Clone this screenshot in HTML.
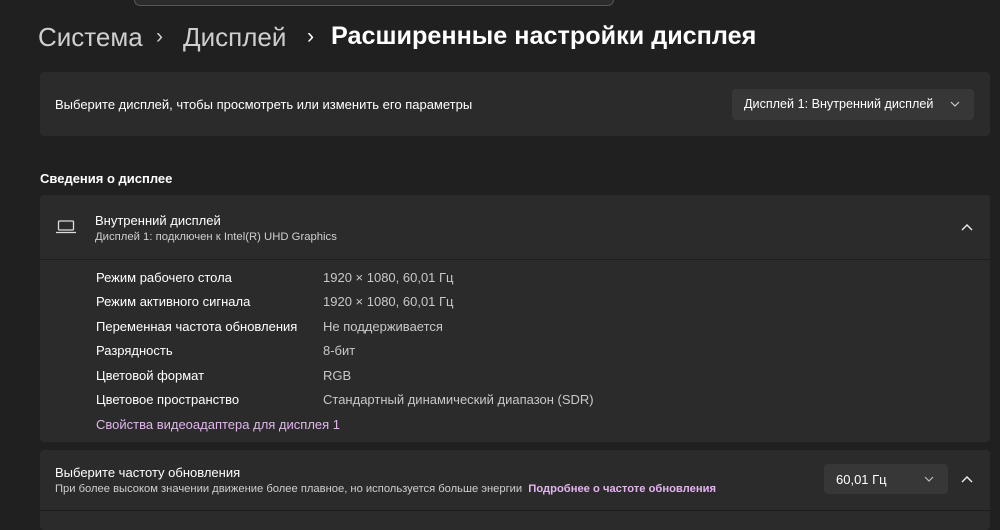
<!DOCTYPE html>
<html><head><meta charset="utf-8"><style>
body{margin:0;width:1000px;height:515px;background:#202020;font-family:"Liberation Sans","DejaVu Sans",sans-serif;color:#fff;position:relative;overflow:hidden}
.a{position:absolute}
.card{position:absolute;left:40px;width:950px;background:#2b2b2b;border-radius:4px}
.t{font-size:13px;color:#fff;white-space:nowrap}
.s{font-size:11.3px;color:#cfcfcf;white-space:nowrap}
.l{position:absolute;left:96px;font-size:13px;color:#fff;white-space:nowrap}
.v{position:absolute;left:323px;font-size:13px;color:#c8c8c8;white-space:nowrap}
.h{position:absolute;top:22px;font-size:26px;white-space:nowrap}
</style></head><body>
<div class="a" style="left:134px;top:-10px;width:478px;height:14px;border:1px solid #555;border-radius:6px;background:#2c2c2c"></div>
<div class="h" style="left:38px;color:#cfcfcf">Система</div>
<div class="h" style="left:156px;color:#cfcfcf;font-size:21px;top:25px">›</div>
<div class="h" style="left:183px;color:#cfcfcf">Дисплей</div>
<div class="h" style="left:307px;color:#fff;font-size:21px;top:25px">›</div>
<div class="h" style="left:331px;font-weight:bold;font-size:25.2px;top:22px">Расширенные настройки дисплея</div>
<div class="card" style="top:72px;height:64px">
<div class="a t" style="left:15px;top:25px">Выберите дисплей, чтобы просмотреть или изменить его параметры</div>
<div class="a" style="left:692px;top:17px;width:242px;height:31px;background:#373737;border-radius:4px"><span class="a t" style="left:12px;top:8px;font-size:12.6px">Дисплей 1: Внутренний дисплей</span><svg class="a" style="left:218px;top:12px" width="10" height="6"><path d="M1 1L5 5L9 1" stroke="#ccc" fill="none" stroke-width="1.2"/></svg></div>
</div>
<div class="a" style="left:40px;top:171px;font-size:13px;font-weight:bold">Сведения о дисплее</div>
<div class="card" style="top:195px;height:247px">
<svg class="a" style="left:16px;top:25px" width="20" height="14"><rect x="2.5" y="1" width="15" height="9" rx="1" stroke="#ddd" fill="none" stroke-width="1.3"/><path d="M0 12.5H20" stroke="#ddd" stroke-width="1.3"/></svg>
<div class="a t" style="left:55px;top:18px">Внутренний дисплей</div>
<div class="a s" style="left:55px;top:36px">Дисплей 1: подключен к Intel(R) UHD Graphics</div>
<svg class="a" style="left:921px;top:28px" width="12" height="8"><path d="M1 7L6 2L11 7" stroke="#eee" fill="none" stroke-width="1.4"/></svg>
<div class="a" style="left:0;top:64px;width:950px;height:1px;background:#1e1e1e"></div>
</div>
<div class="l" style="top:270px">Режим рабочего стола</div><div class="v" style="top:270px">1920 × 1080, 60,01 Гц</div>
<div class="l" style="top:294px">Режим активного сигнала</div><div class="v" style="top:294px">1920 × 1080, 60,01 Гц</div>
<div class="l" style="top:319px">Переменная частота обновления</div><div class="v" style="top:319px">Не поддерживается</div>
<div class="l" style="top:343px">Разрядность</div><div class="v" style="top:343px">8-бит</div>
<div class="l" style="top:368px">Цветовой формат</div><div class="v" style="top:368px">RGB</div>
<div class="l" style="top:392px">Цветовое пространство</div><div class="v" style="top:392px">Стандартный динамический диапазон (SDR)</div>
<div class="l" style="top:417px;color:#e3b4f0">Свойства видеоадаптера для дисплея 1</div>
<div class="card" style="top:450px;height:80px">
<div class="a t" style="left:15px;top:15px">Выберите частоту обновления</div>
<div class="a s" style="left:15px;top:33px;font-size:11.2px">При более высоком значении движение более плавное, но используется больше энергии <span style="color:#e3b4f0;font-weight:bold;margin-left:3px">Подробнее о частоте обновления</span></div>
<div class="a" style="left:784px;top:14px;width:124px;height:30px;background:#373737;border-radius:4px"><span class="a t" style="left:12px;top:8px">60,01 Гц</span><svg class="a" style="left:100px;top:12px" width="10" height="6"><path d="M1 1L5 5L9 1" stroke="#bbb" fill="none" stroke-width="1.2"/></svg></div>
<svg class="a" style="left:921px;top:25px" width="12" height="8"><path d="M1 7L6 2L11 7" stroke="#eee" fill="none" stroke-width="1.4"/></svg>
<div class="a" style="left:0;top:60px;width:950px;height:1px;background:#1e1e1e"></div>
</div>
</body></html>
